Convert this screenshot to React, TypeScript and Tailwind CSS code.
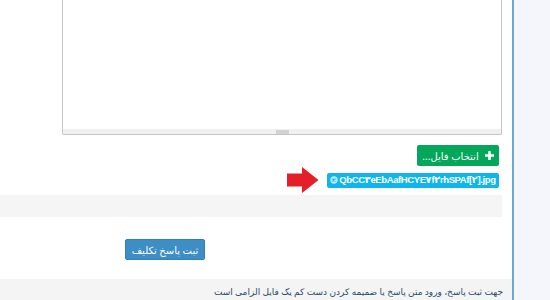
import React from "react";

const font = { fontFamily: '"Noto Sans", "DejaVu Sans", sans-serif' };
const latin = { fontFamily: '"Liberation Sans", "DejaVu Sans", sans-serif' };

export default function App() {
  return (
    <div className="flex w-[550px] h-[300px] overflow-hidden bg-white" style={font}>
      <div className="w-[512px] flex flex-col bg-white">
        {/* textarea */}
        <div className="ml-[62px] w-[440px] h-[135px] border border-t-0 border-[#c4c4c4] rounded-b-[2px] flex flex-col bg-white">
          <div className="flex-1" />
          <div className="h-[5px] bg-[#f0f0f0] flex justify-center">
            <div className="w-[13px] h-[4px] mt-[1px] bg-[#d2d2d2]" />
          </div>
        </div>
        {/* choose file */}
        <div className="w-[502px] flex justify-end pr-[3px] mt-[10px]">
          <button
            dir="rtl"
            className="w-[82px] h-[21px] bg-[#03a75a] rounded-[2px] text-white text-[10px] flex items-center justify-center gap-[6px]"
          >
            <svg width="9" height="9" viewBox="0 0 9 9">
              <path d="M3.2 0h2.6v3.2H9v2.6H5.8V9H3.2V5.8H0V3.2h3.2z" fill="#fff" />
            </svg>
            <span className="leading-none">انتخاب فایل...</span>
          </button>
        </div>
        {/* arrow + file pill */}
        <div className="w-[502px] flex justify-end items-center pr-[3px] mt-px h-[26px]">
          <svg width="32" height="26" viewBox="0 0 32 26" className="mr-[8px]">
            <rect x="0" y="6.5" width="16" height="13" fill="#e51f28" />
            <polygon points="15,0 31.5,13 15,26" fill="#e51f28" />
          </svg>
          <div
            className="min-w-[172px] h-[15px] bg-[#0db7ed] rounded-[2px] flex items-center justify-center px-[3px] text-white text-[9.5px] font-bold leading-none"
            style={latin}
          >
            <svg width="8" height="8" viewBox="0 0 10 10" className="mr-[1px] shrink-0">
              <circle cx="5" cy="5" r="4.6" fill="#bfe6f7" />
              <path d="M3.2 3.2 L6.8 6.8 M6.8 3.2 L3.2 6.8" stroke="#0db7ed" strokeWidth="1.5" />
            </svg>
            <span className="whitespace-nowrap tracking-[-0.4px]">QbCC۳eEbAafHCYE۷f۲rhSPAf[۲].jpg</span>
          </div>
        </div>
        {/* gray band */}
        <div className="w-[502px] h-[22px] mt-[2px] bg-[#f5f5f5]" />
        {/* submit */}
        <div className="mt-[22px] ml-[125px]">
          <button
            dir="rtl"
            className="w-[80px] h-[21px] bg-[#3d8ec4] border border-[#3580b3] rounded-[2px] text-white text-[10px] flex items-center justify-center leading-none"
          >
            ثبت پاسخ تکلیف
          </button>
        </div>
        {/* note band */}
        <div className="mt-[19px] flex-1 bg-[#f4f4f4] flex justify-end pr-[9px] pt-[8px]">
          <div dir="rtl" className="text-[9px] text-[#2e4a66] leading-none whitespace-nowrap">
            جهت ثبت پاسخ، ورود متن پاسخ یا ضمیمه کردن دست کم یک فایل الزامی است
          </div>
        </div>
      </div>
      <div className="w-[2px] bg-[#6ea6d9]" />
      <div className="flex-1 bg-[#f4f6fb]" />
    </div>
  );
}
